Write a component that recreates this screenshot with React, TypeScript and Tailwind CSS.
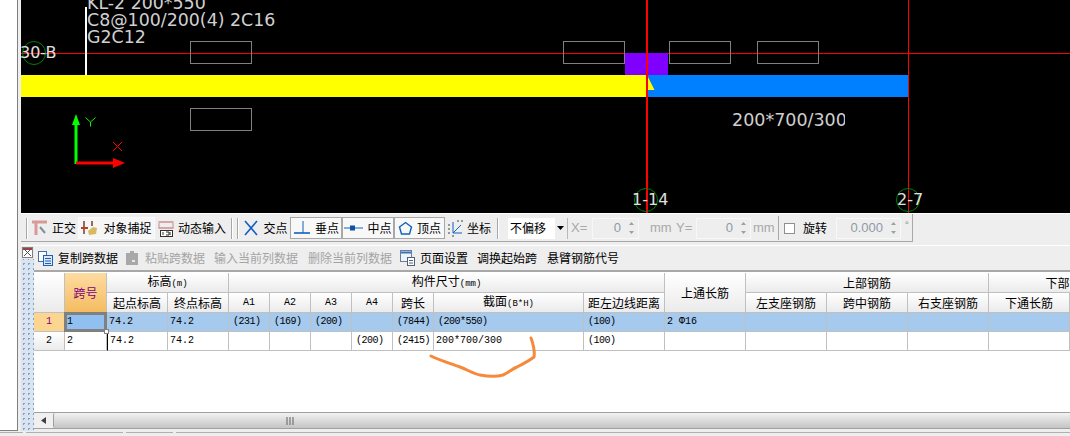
import { ReactNode } from "react";

const cn = "font-['Noto_Sans_CJK_SC','Liberation_Sans',sans-serif]";
const mono = "font-['Liberation_Mono','Noto_Sans_CJK_SC',monospace]";
const cad = "font-['DejaVu_Sans',sans-serif]";

const Frame = ({ x, y }: { x: number; y: number }) => (
  <div
    className="absolute w-[62px] h-[23px] border border-[#808080]"
    style={{ left: x, top: y }}
  />
);

const AxisCircle = ({ x, y }: { x: number; y: number }) => (
  <div
    className="absolute w-[24px] h-[24px] rounded-full border border-[#008000]"
    style={{ left: x - 12, top: y - 12 }}
  />
);

const Canvas = () => (
  <div className={`relative h-[213px] bg-black overflow-hidden ${cad}`}>
    <div className="absolute left-0 right-0 top-[53px] h-px bg-[#ff0000]" />
    <div className="absolute left-[64px] top-[7px] w-[2px] h-[68px] bg-white" />
    <Frame x={169} y={41} />
    <Frame x={169} y={108} />
    <Frame x={542} y={41} />
    <Frame x={648} y={41} />
    <Frame x={736} y={41} />
    <div className="absolute left-[604px] top-[53px] w-[43px] h-[22px] bg-[#8000ff]" />
    <div className="absolute left-0 top-[75px] w-[626px] h-[22px] bg-[#ffff00]" />
    <div className="absolute left-[626px] top-[75px] w-[261px] h-[22px] bg-[#0080ff]" />
    <svg className="absolute left-[626px] top-[75px]" width="8" height="16">
      <path d="M0 0L7.500 15H0Z" fill="#ffff00" />
    </svg>
    <div className="absolute left-[625px] top-0 w-[2px] h-[213px] bg-[#ff0000]" />
    <div className="absolute left-[887px] top-0 w-[1px] h-[213px] bg-[#ff0000]" />

    <div className="absolute left-[66px] top-[-5px] text-[17.400px] leading-[17px] text-[#d0d0d0] whitespace-pre">
      <div>KL-2 200*550</div>
      <div>C8@100/200(4) 2C16</div>
      <div>G2C12</div>
    </div>
    <AxisCircle x={13} y={53} />
    <div className="absolute left-[-1px] top-[43px] text-[16px] leading-[20px] text-[#e0e0e0]">
      30-B
    </div>
    <div className="absolute left-[711px] top-[109px] w-[113px] overflow-hidden text-[17.500px] leading-[22px] text-[#d0d0d0] whitespace-nowrap">
      200*700/300
    </div>
    <AxisCircle x={625} y={200} />
    <AxisCircle x={887} y={200} />
    <div className="absolute left-[611px] top-[190px] text-[16px] leading-[20px] text-[#e0e0e0]">
      1-14
    </div>
    <div className="absolute left-[876px] top-[190px] text-[16px] leading-[20px] text-[#e0e0e0]">
      2-7
    </div>

    <svg className="absolute left-[45px] top-[110px]" width="90" height="62">
      <path d="M10 54V10" stroke="#00ff00" strokeWidth="3" />
      <path d="M10 4L14 15H6Z" fill="#00ff00" />
      <path d="M10 53H50" stroke="#ff0000" strokeWidth="3" />
      <path d="M59 53L47 48V58Z" fill="#ff0000" />
      <path d="M19.500 7.500L24.500 12L29.500 7.500M24.500 12V16.500" stroke="#00ff00" fill="none" />
      <path d="M47 32L56 41M56 32L47 41" stroke="#ff0000" fill="none" />
    </svg>
  </div>
);

const ToolBtn = ({
  icon,
  label,
  active,
  w,
}: {
  icon: ReactNode;
  label: string;
  active?: "hover" | "pressed";
  w: number;
}) => (
  <div
    className={`flex items-center justify-center gap-[4px] h-[22px] shrink-0 text-[12px] text-black ${
      active === "pressed"
        ? "border border-[#a8a8a8] bg-[#f8f8f8]"
        : active === "hover"
          ? "border border-[#fafafa] bg-[#f6f6f6]"
          : ""
    }`}
    style={{ width: w }}
  >
    {icon}
    <span>{label}</span>
  </div>
);

const Grip = () => (
  <div className="w-[2px] h-[21px] mx-[2px] shrink-0 border-l border-[#a8a8a8] bg-white" />
);

const Spin = ({ value, w }: { value: string; w: number }) => (
  <div
    className="flex items-center justify-end h-[21px] border border-[#f8f8f8] text-[#8f9aa8] text-[12px] font-['Liberation_Sans',sans-serif] shrink-0"
    style={{ width: w }}
  >
    <span className="text-[13px]">{value}</span>
    <svg className="ml-[7px] mr-[3px]" width="7" height="14">
      <path d="M3.500 1L6 4H1Z M1 10H6L3.500 13Z" fill="#a0a0a0" />
    </svg>
  </div>
);

const MainToolbar = () => (
  <div className="flex items-stretch">
    <div
      className={`flex items-center h-[28px] w-[892px] pt-[1px] pl-[3px] border-b border-r border-[#a8a8a8] ${cn}`}
    >
      <Grip />
      <ToolBtn
        w={48}
        label="正交"
        icon={
          <svg width="16" height="16">
            <path d="M0 2H15M4 2V15" stroke="#d89a98" strokeWidth="3" fill="none" />
            <path d="M8 7L13 13" stroke="#8090a0" strokeWidth="2" />
          </svg>
        }
      />
      <ToolBtn
        w={77}
        active="hover"
        label="对象捕捉"
        icon={
          <svg width="18" height="18">
            <path d="M3 2V15M11 2V7" stroke="#704030" strokeWidth="1.500" />
            <path d="M0 9H7" stroke="#c04020" strokeWidth="2" />
            <path d="M7 12L12 8L16 9L15 15L8 16Z" fill="#d8b860" />
          </svg>
        }
      />
      <ToolBtn
        w={74}
        label="动态输入"
        icon={
          <svg width="16" height="17">
            <path d="M0.500 2H15.500M0.500 8H15.500" stroke="#c06060" />
            <path d="M1 3V8M15 3V8" stroke="#c09090" />
            <rect x="2.500" y="10.500" width="12" height="6" fill="#fff" stroke="#303030" />
            <path d="M5 12V15M8 12H11V15H8M12 12V15" stroke="#303030" fill="none" />
          </svg>
        }
      />
      <Grip />
      <Grip />
      <ToolBtn
        w={49}
        label="交点"
        icon={
          <svg width="16" height="16">
            <path d="M2 1L14 15M14 1L2 15" stroke="#1060c0" strokeWidth="1.600" />
          </svg>
        }
      />
      <ToolBtn
        w={52}
        active="pressed"
        label="垂点"
        icon={
          <svg width="18" height="16">
            <path d="M1 13H17" stroke="#1060c0" strokeWidth="1.600" />
            <path d="M10 1V13" stroke="#1060c0" />
          </svg>
        }
      />
      <ToolBtn
        w={52}
        active="pressed"
        label="中点"
        icon={
          <svg width="19" height="10">
            <path d="M0 5H19" stroke="#1060c0" />
            <rect x="6" y="2.500" width="5" height="5" fill="#1050a0" />
          </svg>
        }
      />
      <ToolBtn
        w={51}
        active="pressed"
        label="顶点"
        icon={
          <svg width="15" height="15">
            <path d="M7.500 1.500L13.500 6L11.500 13H3.500L1.500 6Z" fill="none" stroke="#1060c0" strokeWidth="1.400" />
          </svg>
        }
      />
      <ToolBtn
        w={48}
        label="坐标"
        icon={
          <svg width="16" height="17">
            <path d="M6 2V13H15" stroke="#1060c0" fill="none" />
            <path d="M6 13L14 5" stroke="#1060c0" />
            <path d="M1 5H3M1 9H3M1 13H3M5 16H7M10 1H12M14 1H16" stroke="#404040" />
          </svg>
        }
      />
      <div className="ml-[2px]"><Grip /></div>
      <div className="flex items-center h-[21px] w-[57px] ml-[7px] bg-white text-[12px] text-black shrink-0">
        <span className="pl-[2px] flex-1">不偏移</span>
        <div className="flex items-center justify-center w-[10px] h-full bg-[#eeeeee]">
          <svg width="7" height="4">
            <path d="M0 0H7L3.500 4Z" fill="#000" />
          </svg>
        </div>
      </div>
      <div className="w-[1px] h-[21px] ml-[2px] bg-[#b8b8b8] shrink-0" />
      <div className="flex items-center text-[13px] text-[#a8a8a8] font-['Liberation_Sans',sans-serif]">
        <span className="w-[24px] pl-[3px]">X=</span>
        <Spin value="0" w={47} />
        <span className="w-[24px] pl-[11px] mr-[14px]">mm</span>
        <span className="w-[20px] ml-[-1px]">Y=</span>
        <Spin value="0" w={55} />
        <span className="w-[24px] pl-[2px]">mm</span>
      </div>
      <div className="w-[1px] h-[24px] ml-[3px] bg-[#a8a8a8] shrink-0" />
      <div className="w-[11px] h-[11px] ml-[5px] border border-[#909090] bg-white shrink-0" />
      <span className="ml-[8px] w-[24px] text-[12px] text-black shrink-0">旋转</span>
      <div className="ml-[9px]"><Spin value="0.000" w={65} /></div>
      <span className="ml-[4px] text-[10px] leading-[10px] text-[#909090] mb-[6px]">°</span>
    </div>
  </div>
);

const ActionBtn = ({
  label,
  icon,
  disabled,
  ml,
}: {
  label: string;
  icon?: ReactNode;
  disabled?: boolean;
  ml: number;
}) => (
  <div
    className={`flex items-center gap-[5px] text-[12px] shrink-0 ${
      disabled ? "text-[#a4a4a4]" : "text-black"
    }`}
    style={{ marginLeft: ml }}
  >
    {icon}
    <span>{label}</span>
  </div>
);

const ActionBar = () => (
  <div className={`flex items-center h-[26px] pl-[4px] border-b-2 border-[#a8a8a8] ${cn}`}>
    <ActionBtn
      ml={0}
      label="复制跨数据"
      icon={
        <svg width="15" height="15">
          <rect x="0.500" y="0.500" width="8" height="10" fill="#fff" stroke="#4070b0" />
          <rect x="5.500" y="4.500" width="9" height="10" fill="#d8e8f8" stroke="#2060b0" />
          <path d="M7 7.500H13M7 10H13M7 12.500H13" stroke="#2060b0" />
        </svg>
      }
    />
    <ActionBtn
      ml={7}
      disabled
      label="粘贴跨数据"
      icon={
        <svg width="15" height="15">
          <path d="M1 2H5V0H9V2H13V14H1Z" fill="#a8a8a8" />
          <rect x="7" y="9" width="3" height="2" fill="#e8e8e8" />
        </svg>
      }
    />
    <ActionBtn ml={9} disabled label="输入当前列数据" />
    <ActionBtn ml={10} disabled label="删除当前列数据" />
    <ActionBtn
      ml={8}
      label="页面设置"
      icon={
        <svg width="15" height="16">
          <rect x="0.500" y="0.500" width="11" height="11" fill="#f0f4fa" stroke="#6080a8" />
          <path d="M1 2.500H11" stroke="#4070b0" strokeWidth="2" />
          <rect x="7.500" y="7.500" width="7" height="8" fill="#fff" stroke="#506078" />
          <path d="M9 10.500H13M9 13H13" stroke="#506078" />
        </svg>
      }
    />
    <ActionBtn ml={9} label="调换起始跨" />
    <ActionBtn ml={10} label="悬臂钢筋代号" />
  </div>
);

const colWidths = [31, 42, 61, 61, 41, 41, 41, 41, 41, 150, 81, 81, 81, 81, 81, 81, 81];

const headCell =
  "border-r border-b border-[#c0c0c0] bg-gradient-to-b from-white to-[#ebebeb] font-normal text-center text-[12px] leading-[16px] text-black p-0 overflow-hidden whitespace-nowrap";
const bodyCell =
  "border-r border-b border-[#c0c0c0] text-left p-0 text-[10px] leading-[16px] text-black overflow-hidden whitespace-nowrap";

const small = `${mono} text-[9px]`;

const rows = [
  ["1", "1", "74.2", "74.2", "(231)", "(169)", "(200)", "", "(7844)", "(200*550)", "(100)"],
  ["2", "2", "74.2", "74.2", "", "", "", "(200)", "(2415)", "200*700/300", "(100)"],
];

const SpanTable = () => (
  <table className={`table-fixed border-separate border-spacing-0 w-[1037px] mt-[1px] ${cn}`}>
    <colgroup>
      {colWidths.map((w, i) => (
        <col key={i} style={{ width: w }} />
      ))}
    </colgroup>
    <thead>
      <tr className="h-[19px]">
        <th rowSpan={2} className={headCell}></th>
        <th
          rowSpan={2}
          className="border-r border-b border-[#c0c0c0] bg-gradient-to-b from-[#fddca0] to-[#f4bc60] font-normal text-center text-[12px] leading-[16px] text-[#800080] p-0"
        >
          跨号
        </th>
        <th colSpan={2} className={headCell}>
          标高<span className={small}>(m)</span>
        </th>
        <th colSpan={7} className={headCell}>
          构件尺寸<span className={small}>(mm)</span>
        </th>
        <th rowSpan={2} className={headCell}>
          上通长筋
        </th>
        <th colSpan={3} className={headCell}>
          上部钢筋
        </th>
        <th colSpan={2} className={headCell}>
          下部钢筋
        </th>
      </tr>
      <tr className="h-[19px]">
        <th className={headCell}>起点标高</th>
        <th className={headCell}>终点标高</th>
        {["A1", "A2", "A3", "A4"].map((a) => (
          <th key={a} className={`${headCell} ${mono} !text-[10px]`}>
            {a}
          </th>
        ))}
        <th className={headCell}>跨长</th>
        <th className={headCell}>
          截面<span className={small}>(B*H)</span>
        </th>
        <th className={headCell}>距左边线距离</th>
        <th className={headCell}>左支座钢筋</th>
        <th className={headCell}>跨中钢筋</th>
        <th className={headCell}>右支座钢筋</th>
        <th className={headCell}>下通长筋</th>
        <th className={headCell}></th>
      </tr>
    </thead>
    <tbody>
      {rows.map((r, i) => (
        <tr key={i} className={`h-[19px] ${i === 0 ? "bg-[#a6c9ee]" : "bg-white"}`}>
          <td
            className={`border-r border-b border-[#c0c0c0] text-center text-[10px] leading-[16px] p-0 ${mono} ${
              i === 0
                ? "bg-[#fcd591] text-[#800080]"
                : "bg-gradient-to-b from-white to-[#ebebeb] text-black"
            }`}
          >
            {r[0]}
          </td>
          {r.slice(1).map((v, j) => (
            <td
              key={j}
              className={`${bodyCell} ${mono} ${
                v.startsWith("(") ? "pl-[4px] tracking-[-0.5px]" : "pl-[2px]"
              } ${j === 0 && i === 0 ? "relative overflow-visible !bg-[#90c0f0]" : ""} ${
                j === 1 && i === 1 ? "border-l border-l-black" : ""
              }`}
            >
              {v}
              {j === 0 && i === 0 && (
                <>
                  <div className="absolute inset-[-1px] border-[3px] border-[#808080]" />
                  <div className="absolute right-[-3px] bottom-[-3px] w-[5px] h-[5px] bg-white border border-[#808080]" />
                </>
              )}
            </td>
          ))}
          <td className={`${bodyCell} ${mono} pl-[2px]`}>{i === 0 ? "2 Φ16" : ""}</td>
          <td className={bodyCell}></td>
          <td className={bodyCell}></td>
          <td className={bodyCell}></td>
          <td className={bodyCell}></td>
          <td className={bodyCell}></td>
        </tr>
      ))}
    </tbody>
  </table>
);

const ScrollBar = () => (
  <div className="flex items-stretch h-[17px] mx-0 border-y border-[#a0a0a0] bg-[#f0f0f0]">
    <div className="flex items-center justify-center w-[19px] shrink-0">
      <svg width="5" height="7">
        <path d="M5 0V7L0 3.500Z" fill="#404040" />
      </svg>
    </div>
    <div className="flex items-center flex-1 pl-[232px] rounded-l-[2px] border-l border-[#a0a0a0] bg-gradient-to-b from-[#f2f2f2] to-[#c4c4c4]">
      <svg width="9" height="8">
        <path d="M1 0V8M4 0V8M7 0V8" stroke="#606060" />
      </svg>
    </div>
  </div>
);

const Splitter = () => (
  <div className="w-[13px] shrink-0 bg-[#d8e4f4] bg-[radial-gradient(#8f9db0_1px,transparent_1px)] bg-[length:5px_5px]">
    <div className="h-[13px] bg-[#e8e8e8]">
      <svg width="13" height="13">
        <rect x="1.500" y="1.500" width="10" height="10" fill="#fff" stroke="#808080" />
        <path d="M2 2H11V4H2Z" fill="#a04040" />
        <path d="M3 3L10 10M10 3L3 10" stroke="#505050" />
      </svg>
    </div>
  </div>
);

const OrangeMark = () => (
  <svg className="absolute left-[390px] top-[60px]" width="120" height="50">
    <path
      d="M7 24C12 27 28 32 36 35C44 38 50 42 56 43C64 44.500 74 44.500 79 43C84 41 88 37 93 35C99 32 106 28 110 25C111 20 109 11 107 6"
      fill="none"
      stroke="#f58a3c"
      strokeWidth="3"
      strokeLinejoin="round"
      strokeLinecap="round"
    />
  </svg>
);

export default function App() {
  return (
    <div className="w-[1070px] h-[436px] overflow-hidden bg-white flex flex-col">
      <div className="flex h-[431px] shrink-0">
        <div className="w-[18px] shrink-0 bg-white border-r border-b border-[#808080]" />
        <div className="w-[3px] shrink-0 bg-[#eeeeee]" />
        <div className="flex-1 min-w-0 flex flex-col bg-[#eeeeee]">
          <Canvas />
          <div className="h-px bg-white" />
          <MainToolbar />
          <div className="h-[3px]" />
          <div className="h-px bg-white" />
          <div className="flex flex-1 min-h-0">
            <Splitter />
            <div className="flex-1 min-w-0 flex flex-col">
              <ActionBar />
              <div className="relative flex-1 min-h-0 bg-white overflow-hidden">
                <SpanTable />
                <OrangeMark />
              </div>
              <ScrollBar />
              <div className="h-[2px] bg-[#eeeeee]" />
            </div>
          </div>
        </div>
      </div>
      <div className="flex flex-1 bg-[#eeeeee] gap-[3px] pt-[1px]">
        <div className="w-[23px] border-t border-[#b0b0b0]" />
        <div className="w-[97px] border-t border-[#b0b0b0]" />
        <div className="w-[47px] border-t border-[#b0b0b0]" />
        <div className="flex-1 border-t border-[#b0b0b0]" />
      </div>
    </div>
  );
}
